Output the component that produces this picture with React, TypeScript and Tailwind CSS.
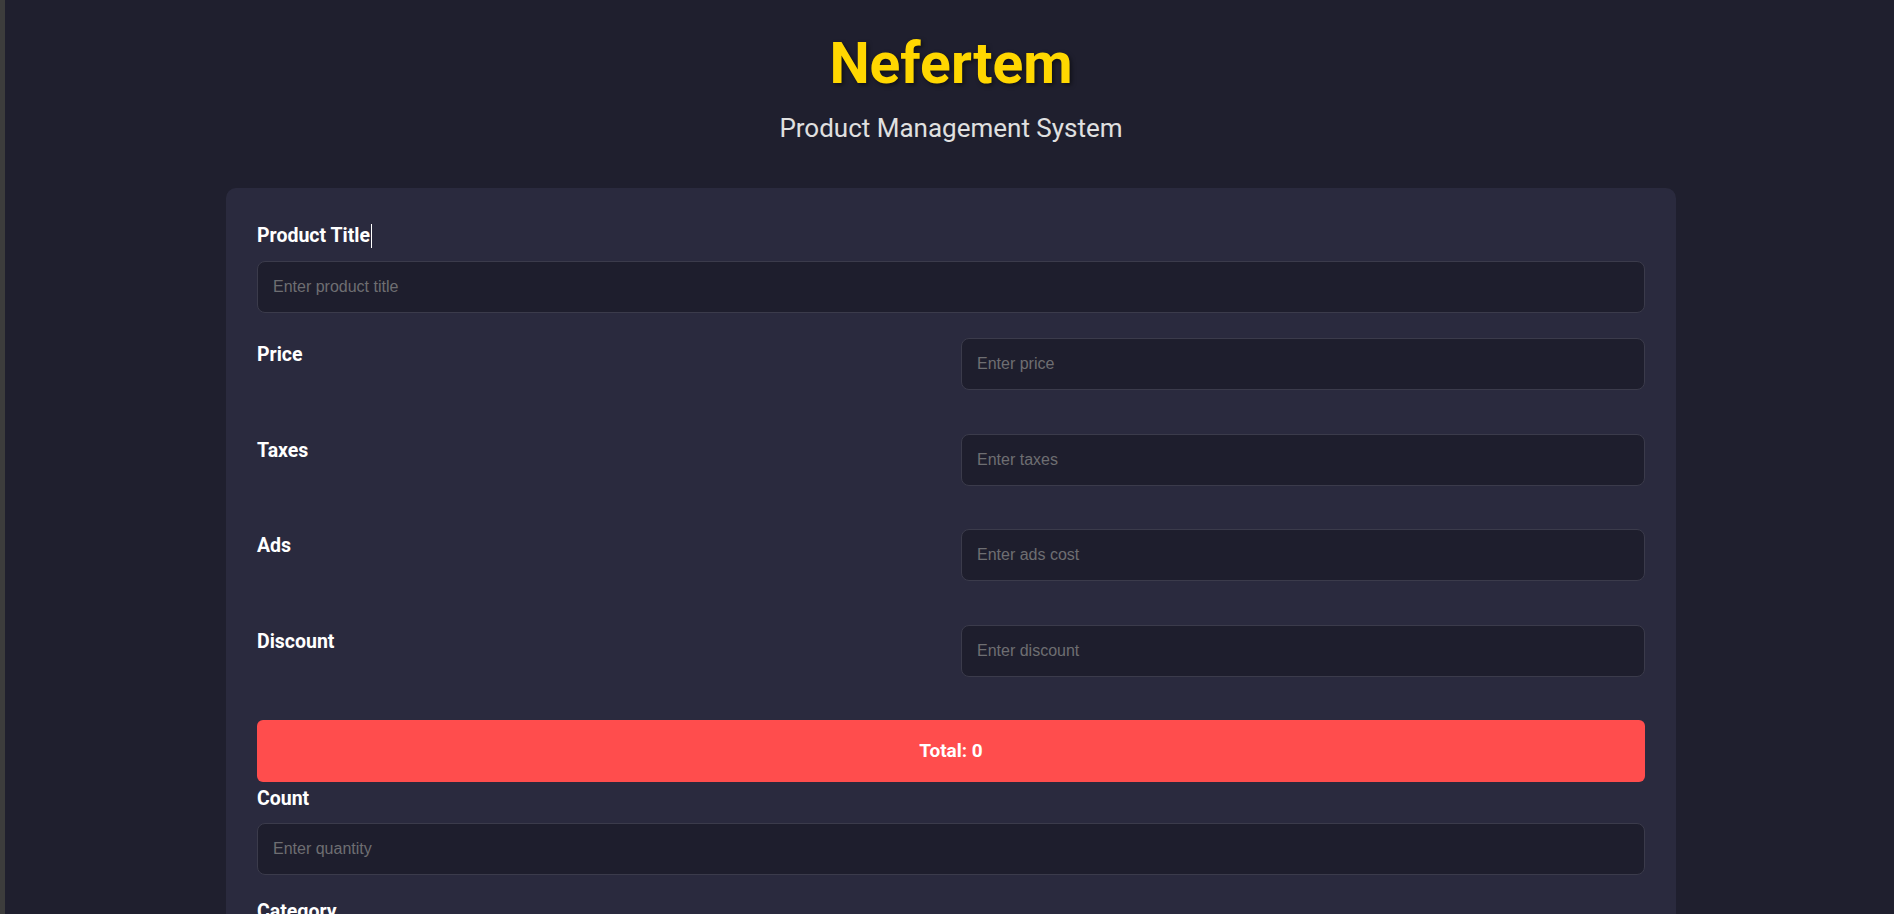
import { useState } from "react";

const roboto = { fontFamily: "Roboto, 'Noto Sans', sans-serif" };

type Field = { key: string; label: string; placeholder: string };

const costFields: Field[] = [
  { key: "price", label: "Price", placeholder: "Enter price" },
  { key: "taxes", label: "Taxes", placeholder: "Enter taxes" },
  { key: "ads", label: "Ads", placeholder: "Enter ads cost" },
  { key: "discount", label: "Discount", placeholder: "Enter discount" },
];

const inputCls =
  "block w-full h-[52px] rounded-lg border border-[#3b3b4b] bg-[#1e1e2d] px-[15px] text-[16px] text-white outline-none placeholder:text-[#6e6e72] font-['Liberation_Sans',Arial,sans-serif]";

const labelCls = "block text-[19.5px] leading-[24px] font-bold text-white";

export default function App() {
  const [values, setValues] = useState<Record<string, string>>({});

  const num = (k: string) => Number(values[k]) || 0;
  const total = num("price") + num("taxes") + num("ads") - num("discount");

  const set = (k: string, v: string) => setValues((prev) => ({ ...prev, [k]: v }));

  return (
    <div className="flex h-screen overflow-hidden bg-[#1f1f2e]" style={roboto}>
      {/* left window edge */}
      <div className="w-[5px] shrink-0 bg-[#3c3c3c]" />

      <div className="flex flex-1 flex-col items-center pl-[3px]">
        <h1 className="mt-[30px] text-[57px] leading-[67px] font-bold text-[#ffd700] [text-shadow:2px_2px_4px_rgba(0,0,0,0.5)]">
          Nefertem
        </h1>
        <p className="mt-[16px] text-[26px] leading-[30px] text-[#e0e0e0]">Product Management System</p>

        <div className="mt-[45px] w-[1450px] shrink-0 rounded-[10px] bg-[#2a2a3e] px-[31px] pt-[36px] pb-8">
          {/* Title */}
          <div className="mb-[25px]">
            <label className={`${labelCls} mb-[13px]`}>
              Product Title
              <span className="ml-px inline-block h-[24px] w-px bg-white align-top" />
            </label>
            <input
              className={inputCls}
              placeholder="Enter product title"
              value={values.title ?? ""}
              onChange={(e) => set("title", e.target.value)}
            />
          </div>

          {/* Costs */}
          {costFields.map((f) => (
            <div key={f.key} className="mb-[43.6px] grid grid-cols-2 gap-5">
              <label className={`${labelCls} mt-[5px]`}>{f.label}</label>
              <input
                type="number"
                className={inputCls}
                placeholder={f.placeholder}
                value={values[f.key] ?? ""}
                onChange={(e) => set(f.key, e.target.value)}
              />
            </div>
          ))}

          <div className="mt-[4.5px] flex h-[62px] items-center justify-center rounded-md bg-[#ff4d4d] text-[19px] font-bold text-white">
            Total: {total}
          </div>

          {/* Count */}
          <div className="mt-[5px] mb-[25px]">
            <label className={`${labelCls} mb-[12px]`}>Count</label>
            <input
              type="number"
              className={inputCls}
              placeholder="Enter quantity"
              value={values.count ?? ""}
              onChange={(e) => set("count", e.target.value)}
            />
          </div>

          {/* Category */}
          <div className="mb-[25px]">
            <label className={`${labelCls} mb-[14px]`}>Category</label>
            <input
              className={inputCls}
              placeholder="Enter category"
              value={values.category ?? ""}
              onChange={(e) => set("category", e.target.value)}
            />
          </div>

          <button className="h-[52px] w-full rounded-md bg-[#ffd700] text-[18px] font-bold text-[#1f1f2e]">
            Create
          </button>
        </div>
      </div>
    </div>
  );
}
